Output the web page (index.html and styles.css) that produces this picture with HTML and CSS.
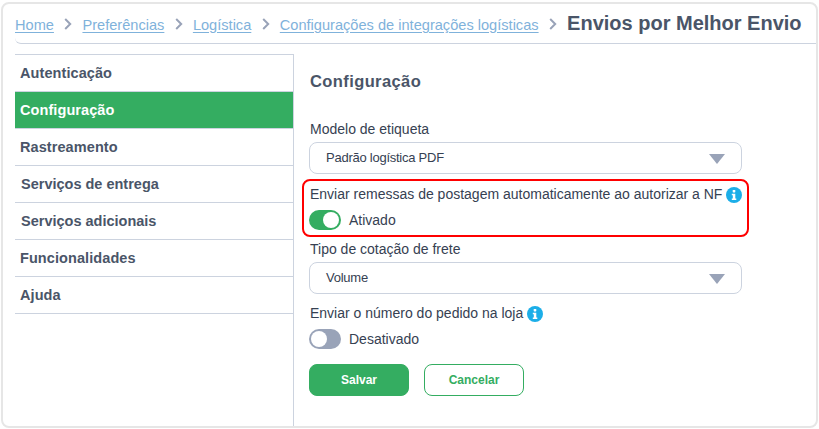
FILE: index.html
```html
<!DOCTYPE html>
<html lang="pt-BR">
<head>
<meta charset="utf-8">
<title>Envios por Melhor Envio</title>
<link rel="stylesheet" href="styles.css">
</head>
<body>
<div class="card">
  <header class="crumbs">
    <a href="#">Home</a>
    <svg class="chev" viewBox="0 0 8 12"><path d="M1.200 1l5 5-5 5"/></svg>
    <a href="#">Preferências</a>
    <svg class="chev" viewBox="0 0 8 12"><path d="M1.200 1l5 5-5 5"/></svg>
    <a href="#">Logística</a>
    <svg class="chev" viewBox="0 0 8 12"><path d="M1.200 1l5 5-5 5"/></svg>
    <a href="#">Configurações de integrações logísticas</a>
    <svg class="chev" viewBox="0 0 8 12"><path d="M1.200 1l5 5-5 5"/></svg>
    <h1>Envios por Melhor Envio</h1>
  </header>
  <div class="body">
    <nav class="side">
      <a href="#" class="item">Autenticação</a>
      <a href="#" class="item active">Configuração</a>
      <a href="#" class="item">Rastreamento</a>
      <a href="#" class="item shifted">Serviços de entrega</a>
      <a href="#" class="item shifted">Serviços adicionais</a>
      <a href="#" class="item">Funcionalidades</a>
      <a href="#" class="item">Ajuda</a>
    </nav>
    <main class="content">
      <h2>Configuração</h2>
      <div class="label first">Modelo de etiqueta</div>
      <div class="select">Padrão logística PDF<span class="arrow"></span></div>
      <div class="highlight">
        <div class="label inline">Enviar remessas de postagem automaticamente ao autorizar a NF
          <svg class="info" viewBox="0 0 16 16"><circle cx="8" cy="8" r="8"/><rect class="i" x="6.700" y="3" width="2.600" height="2.400" rx=".6"/><path class="i" d="M5.800 6.800h3.500v4.700h1v1.500H5.800v-1.500h1V8.300h-1z"/></svg>
        </div>
        <div class="toggle-row"><span class="toggle on"><span class="knob"></span></span>Ativado</div>
      </div>
      <div class="label inline second">Tipo de cotação de frete</div>
      <div class="select">Volume<span class="arrow"></span></div>
      <div class="label inline third">Enviar o número do pedido na loja
        <svg class="info" viewBox="0 0 16 16"><circle cx="8" cy="8" r="8"/><rect class="i" x="6.700" y="3" width="2.600" height="2.400" rx=".6"/><path class="i" d="M5.800 6.800h3.500v4.700h1v1.500H5.800v-1.500h1V8.300h-1z"/></svg>
      </div>
      <div class="toggle-row off-row"><span class="toggle"><span class="knob"></span></span>Desativado</div>
      <div class="actions">
        <button class="btn primary">Salvar</button>
        <button class="btn ghost">Cancelar</button>
      </div>
    </main>
  </div>
</div>
</body>
</html>
```
FILE: styles.css
```css
* { box-sizing: border-box; }
html, body { margin: 0; padding: 0; background: #fff; }
body {
  width: 819px; height: 429px; overflow: hidden;
  padding: 2px 0 0 1px;
  font-family: "Liberation Sans", Arial, sans-serif;
  color: #364152;
}
.card {
  width: 817px; height: 426px;
  border: 2px solid #e6e6e6;
  border-radius: 8px;
  padding: 0 0 0 12px;
  display: flex; flex-direction: column;
  overflow: hidden;
}
.crumbs {
  height: 40px;
  border-bottom: 1px solid #ccd3df;
  border-bottom-left-radius: 6px;
  display: flex; align-items: center;
  font-size: 14.600px;
  white-space: nowrap;
  padding-top: 1px;
}
.crumbs a { color: #7fb2db; text-decoration: underline; text-underline-offset: 2px; position: relative; top: 1px; flex: none; }
.chev { width: 8px; height: 12px; margin: 0 10px 0 10.500px; fill: none; stroke: #99a3b8; stroke-width: 2; flex: none; }
.crumbs h1 { margin: 0; font-size: 20px; font-weight: 700; color: #4a5568; position: relative; top: -1px; flex: none; }
.body { flex: 1; display: flex; padding-top: 10px; min-height: 0; }
.side {
  width: 279px; flex: none;
  border-top: 1px solid #ccd3df;
  border-right: 1px solid #ccd3df;
}
.item {
  display: flex; align-items: center;
  height: 37px;
  padding-left: 5px;
  border-bottom: 1px solid #ccd3df;
  font-size: 14.500px; font-weight: 700;
  color: #4a5568;
  text-decoration: none;
  letter-spacing: .08px;
}
.item.shifted { padding-left: 6px; letter-spacing: 0; }
.item.active { background: #34ad61; color: #fff; }
.content { flex: 1; padding: 0 0 0 15px; font-size: 14px; color: #364152; }
h2 { margin: 17px 0 0 1px; height: 20px; font-size: 16.500px; line-height: 20px; font-weight: 700; color: #4a5568; letter-spacing: .4px; }
.label { font-size: 14px; line-height: 18px; color: #364152; margin-left: 1px; }
.label.first { margin-top: 29px; }
.label.inline { display: flex; align-items: center; white-space: nowrap; }
.select {
  position: relative;
  width: 433px; height: 32px;
  margin-top: 4px;
  border: 1px solid #ccd3df;
  border-radius: 8px;
  padding-left: 16px;
  font-size: 13px; line-height: 30px;
  letter-spacing: -.25px;
  color: #364152;
}
.arrow {
  position: absolute; right: 16px; top: 11px;
  width: 0; height: 0;
  border-left: 8px solid transparent;
  border-right: 8px solid transparent;
  border-top: 10px solid #99a3b8;
}
.highlight {
  width: 447px; height: 58px;
  margin: 5px 0 3px -7px;
  padding: 4px 0 0 5px;
  border: 2px solid #f00;
  border-radius: 8px;
}
.highlight .toggle-row { margin-top: 7px; }
.info { width: 16px; height: 16px; margin-left: 4px; fill: #1caee8; flex: none; position: relative; top: 1px; }
.info .i { fill: #fff; }
.toggle-row { display: flex; align-items: center; gap: 8px; font-size: 14px; line-height: 20px; color: #364152; }
.toggle {
  width: 32px; height: 20px;
  border-radius: 10px;
  background: #99a3b8;
  padding: 2px;
  display: flex;
}
.toggle.on { background: #34ad61; justify-content: flex-end; }
.knob { width: 16px; height: 16px; border-radius: 50%; background: #fff; }
.third { margin-top: 10px; }
.off-row { margin-top: 7px; }
.actions { display: flex; gap: 15px; margin-top: 15px; }
.btn {
  width: 100px; height: 32px;
  border-radius: 8px;
  font: 700 12px "Liberation Sans", Arial, sans-serif;
  cursor: pointer;
}
.primary { background: #34ad61; border: 1px solid #34ad61; color: #fff; }
.ghost { background: #fff; border: 1px solid #34ad61; color: #34ad61; }
```
